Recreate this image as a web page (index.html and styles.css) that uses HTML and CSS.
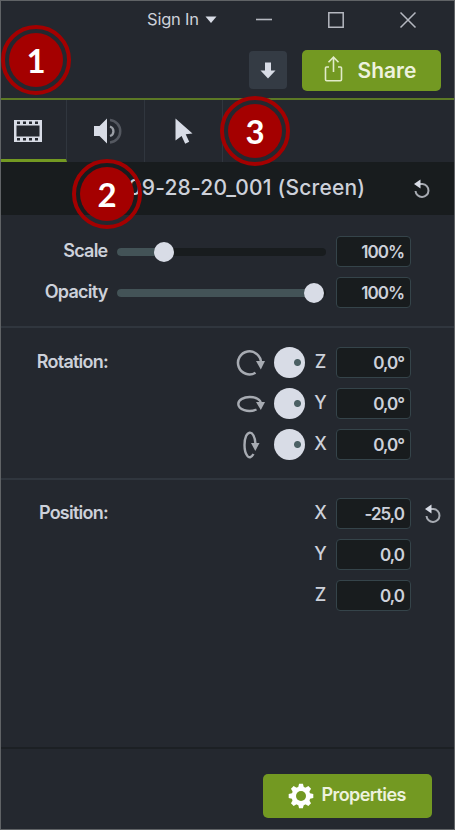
FILE: index.html
```html
<!DOCTYPE html>
<html lang="en">
<head>
<meta charset="utf-8">
<title>Visual Properties</title>
<link rel="stylesheet" href="styles.css">
</head>
<body>
<main class="panel">
  <header class="titlebar">
    <div class="signin"><span>Sign In</span><svg width="12" height="8" viewBox="0 0 12 8"><path d="M.5.5h11L6 7z" fill="#d8dce6"/></svg></div>
    <svg class="min" width="16" height="16" viewBox="0 0 16 16"><path d="M0 7.5h16" stroke="#b5b8c0" stroke-width="1.6"/></svg>
    <svg class="max" width="16" height="16" viewBox="0 0 16 16"><path d="M.8.8h14.4v14.4H.8z" fill="none" stroke="#b5b8c0" stroke-width="1.5"/></svg>
    <svg class="close" width="16" height="16" viewBox="0 0 16 16"><path d="M.5.5l15 15M15.500.5l-15 15" stroke="#b5b8c0" stroke-width="1.5"/></svg>
  </header>
  <div class="actions">
    <button class="download"><svg width="16" height="17" viewBox="0 0 16 17"><path d="M5 .5h6v8h4.500L8 16.500.5 8.500H5z" fill="#d8dce6"/></svg></button>
    <button class="share"><svg width="20" height="26" viewBox="0 0 20 26"><path d="M5 11H2.500Q1.500 11 1.500 12V23.500Q1.500 24.700 2.700 24.700H16.300Q17.500 24.700 17.500 23.500V12Q17.500 11 16.500 11H14M9.500 16V1.500M4.500 6.200L9.500 1.200L14.500 6.200" fill="none" stroke="#e2ebca" stroke-width="1.6"/></svg><span>Share</span></button>
  </div>
  <nav class="tabs">
    <div class="tab active"><svg width="30" height="24" viewBox="0 0 30 24"><path fill-rule="evenodd" fill="#d8dce6" d="M1 1h28v22H1zM3.500 6.500v11h23v-11zM4 2.500v2.500h3V2.500zM10 2.500v2.500h3V2.500zM16 2.500v2.500h3V2.500zM22 2.500v2.500h3V2.500zM4 19v2.500h3V19zM10 19v2.500h3V19zM16 19v2.500h3V19zM22 19v2.500h3V19z"/></svg></div>
    <div class="tab audio"><svg width="30" height="28" viewBox="0 0 30 28"><path d="M1 9h5.500L14 1.500v25L6.500 19H1z" fill="#d8dce6"/><g fill="none"><path d="M17 9.500a5 5 0 0 1 0 9.500" stroke="#9b9fa6" stroke-width="2.300"/><path d="M17 3a11.300 11.300 0 0 1 0 22.500" stroke="#545860" stroke-width="2.500"/></g></svg></div>
    <div class="tab cursor"><svg width="18" height="26" viewBox="0 0 18 26"><path d="M.5.5L17.500 15.500l-6.800.8 3.500 7.500-4 1.900-3.600-7.700-6.100 4.500z" fill="#d8dce6"/></svg></div>
    <div class="tab-space"></div>
  </nav>
  <div class="clip"><span class="clip-name">09-28-20_001 (Screen)</span><svg class="reset" width="18" height="20" viewBox="0 0 18 20"><path d="M5 5H9.500A6.500 6.500 0 1 1 2.500 12" fill="none" stroke="#a7abb2" stroke-width="2"/><path d="M1 5L7.500.5v9z" fill="#d8dce6"/></svg></div>

  <section class="sliders">
    <div class="row"><label>Scale</label><div class="track"><i class="fill low"></i></div><output>100%</output></div>
    <div class="row"><label>Opacity</label><div class="track"><i class="fill high"></i></div><output>100%</output></div>
  </section>

  <section class="group rotation">
    <h2>Rotation:</h2>
    <div class="fields">
      <div class="row"><svg class="turn" width="28" height="28" viewBox="0 0 28 28"><path d="M18.500 23.700A11.500 11.500 0 1 1 24 14" fill="none" stroke="#a7abb2" stroke-width="2.500"/><path d="M19 12h9l-4.200 8.500z" fill="#a7abb2"/></svg><i class="dial"></i><b>Z</b><output>0,0°</output></div>
      <div class="row"><svg class="turn" width="28" height="28" viewBox="0 0 28 28"><path d="M19.500 19.500C11 23 1.300 19.500 1.300 14C1.300 5 24 4.500 24 14" fill="none" stroke="#a7abb2" stroke-width="2.400"/><path d="M19 12h9l-4.200 8z" fill="#a7abb2"/></svg><i class="dial"></i><b>Y</b><output>0,0°</output></div>
      <div class="row"><svg class="turn" width="28" height="28" viewBox="0 0 28 28"><path d="M16.500 23C12 31 7.500 23 7.500 14C7.500-1.500 17.500-3 18.500 13" fill="none" stroke="#a7abb2" stroke-width="2.400"/><path d="M14 12h8.500l-4.200 8z" fill="#a7abb2"/></svg><i class="dial"></i><b>X</b><output>0,0°</output></div>
    </div>
  </section>

  <section class="group position">
    <h2>Position:</h2>
    <div class="fields">
      <div class="row"><b>X</b><output>-25,0</output></div>
      <div class="row"><b>Y</b><output>0,0</output></div>
      <div class="row"><b>Z</b><output>0,0</output></div>
    </div>
    <svg class="reset" width="18" height="20" viewBox="0 0 18 20"><path d="M5 5H9.500A6.500 6.500 0 1 1 2.500 12" fill="none" stroke="#a7abb2" stroke-width="2"/><path d="M1 5L7.500.5v9z" fill="#d8dce6"/></svg>
  </section>

  <footer><button class="props"><svg width="26" height="26" viewBox="-13 -13 26 26"><g fill="#fff"><circle r="9.500"/><path d="M-3-8L-1.900-12.300H1.900L3-8V8L1.900 12.300H-1.900L-3 8z"/><path d="M-3-8L-1.900-12.300H1.900L3-8V8L1.900 12.300H-1.900L-3 8z" transform="rotate(45)"/><path d="M-3-8L-1.900-12.300H1.900L3-8V8L1.900 12.300H-1.900L-3 8z" transform="rotate(90)"/><path d="M-3-8L-1.900-12.300H1.900L3-8V8L1.900 12.300H-1.900L-3 8z" transform="rotate(135)"/></g><circle r="5" fill="#739922"/></svg><span>Properties</span></button></footer>
  <div class="badge one"><span>1</span></div>
  <div class="badge two"><span>2</span></div>
  <div class="badge three"><span>3</span></div>
</main>
</body>
</html>
```
FILE: styles.css
```css
* { box-sizing: border-box; }
body { margin: 0; background: #24282f; }
.panel {
  position: relative; display: flex; flex-direction: column;
  width: 455px; height: 830px; overflow: hidden;
  background: #24282f; border: 1px solid #606366;
  color: #cdd1da; font: 600 18px/24px "Inter", "Liberation Sans", sans-serif;
  letter-spacing: -.75px;
}
svg { display: block; flex: none; overflow: visible; }
button { border: 0; padding: 0; font: inherit; letter-spacing: inherit; color: inherit; display: flex; align-items: center; }
.titlebar { display: flex; height: 37px; padding-left: 146px; align-items: center; flex: none; }
.signin { display: flex; align-items: center; gap: 6px; width: 109px; font-size: 16.5px; font-weight: 400; letter-spacing: -.2px; }
.signin span { margin-top: -2px; }
.min { margin-right: 56px; }
.max { margin-right: 56px; }
.actions { display: flex; flex: none; height: 60px; padding: 12px 13.5px 0 0; justify-content: flex-end; gap: 15px; align-items: flex-start; }
.download { width: 38px; height: 38px; margin-top: 1px; border-radius: 4px; background: #343b44; justify-content: center; }
.share { width: 139px; height: 41px; border-radius: 5px; background: #739922; padding-left: 22px; gap: 14px; font-size: 21px; font-weight: 600; letter-spacing: 0; color: #edf2de; }
.share svg { margin-top: -4px; }
.tabs { display: flex; flex: none; height: 64px; border-top: 2px solid #5c7925; }
.tab { width: 78px; border-right: 1px solid #30363e; display: flex; align-items: center; justify-content: center; }
.tab:first-child { width: 66px; padding-right: 11px; }
.audio { padding-left: 5px; }
.tab.active { border-bottom: 3px solid #739922; padding-top: 3px; }
.clip { display: flex; flex: none; height: 53px; padding-left: 127px; background: #181c1e; align-items: center; }
.clip-name { width: 285px; margin-top: -1px; font-size: 21px; font-weight: 500; letter-spacing: .2px; white-space: nowrap; }
.sliders { flex: none; height: 113px; padding: 21px 43px 0 0; border-bottom: 2px solid #30363e; display: grid; grid-template-rows: 31px 31px; row-gap: 10px; }
.row { display: flex; align-items: center; justify-content: flex-end; }
label { width: 106.5px; text-align: right; margin-right: auto; margin-top: -2px; }
.track { width: 209px; height: 8px; margin: 1px 10px 0 0; border-radius: 4px; background: #181c1e; }
.fill { display: block; position: relative; height: 8px; border-radius: 4px; background: #435357; }
.low { width: 47px; }
.high { width: 197px; }
.fill::after { content: ""; position: absolute; right: -10px; top: -6px; width: 20px; height: 20px; border-radius: 50%; background: #d8dce6; }
output { width: 75px; height: 31px; padding-right: 6px; border: 1.500px solid #35444a; border-radius: 4px; background: #181c1e; text-align: right; line-height: 30px; font-size: 17px; letter-spacing: -1px; }
.group { display: flex; flex: none; padding-right: 43px; justify-content: space-between; }
.rotation { height: 152px; padding-top: 19px; border-bottom: 2px solid #30363e; }
.position { position: relative; height: 267px; padding-top: 18px; }
h2 { margin: 3px 0 0; width: 107px; text-align: right; font-size: 18px; font-weight: 600; }
.fields { display: grid; grid-auto-rows: 31px; align-content: start; row-gap: 10px; }
.fields b { width: 13px; margin: -2px 9px 0 9px; font-weight: 500; text-align: center; letter-spacing: 0; }
.turn { margin-right: 9px; }
.dial { width: 31px; height: 31px; border-radius: 50%; background: radial-gradient(circle at 23.500px 15.500px, #4b6064 3px, #d8dce6 4px); }
.position .reset { position: absolute; right: 12px; top: 24px; }
footer { flex: 1; display: flex; justify-content: flex-end; padding: 25px 22.5px 0 0; border-top: 2px solid #1c2024; }
.props { width: 169px; height: 44px; border-radius: 5px; background: #739922; padding-left: 25px; gap: 8px; letter-spacing: -.6px; color: #edf2de; }
.props span { margin-top: -3px; }
.badge { position: absolute; width: 70px; height: 70px; padding: 4px; border: 4px solid #a40000; border-radius: 50%; letter-spacing: 0; }
.badge span { display: block; height: 54px; border-radius: 50%; background: #a40000; color: #fff; text-align: center; font: 700 33px/55px "Lato", sans-serif; }
.one { left: 0; top: 24px; }
.two { left: 71px; top: 158px; }
.three { left: 219px; top: 95px; }
```
